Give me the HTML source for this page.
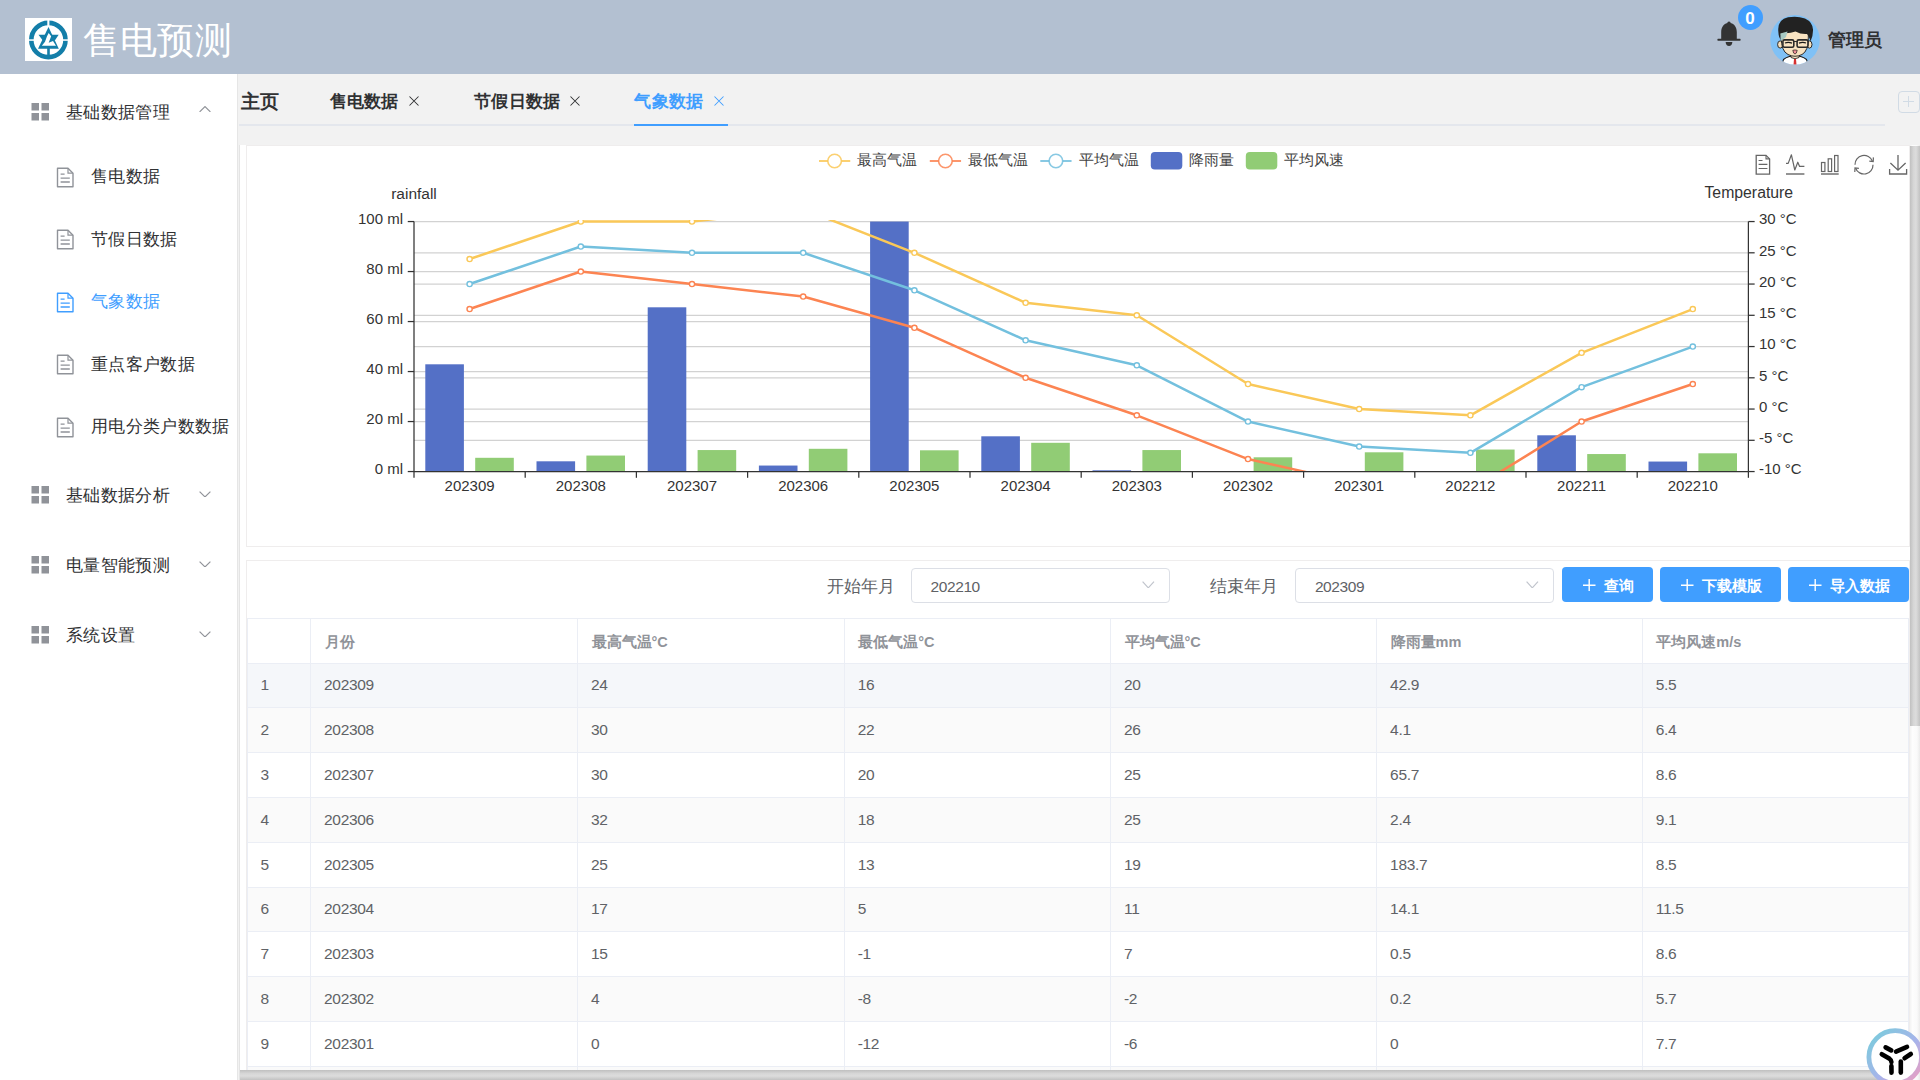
<!DOCTYPE html><html><head><meta charset="utf-8"><title>售电预测</title><style>

*{margin:0;padding:0;box-sizing:border-box}
html,body{width:1920px;height:1080px;overflow:hidden;background:#fff;font-family:"Liberation Sans",sans-serif;color:#303133}
.abs{position:absolute}
#hdr{position:absolute;left:0;top:0;width:1920px;height:74px;background:#b3c0d1}
#side{position:absolute;left:0;top:74px;width:238px;height:1006px;background:#fff;border-right:1px solid #e6e6e6}
#tabbar{position:absolute;left:238px;top:74px;width:1682px;height:71px;background:#f2f2f2}
.t{position:absolute;white-space:nowrap;line-height:1}
.card{position:absolute;border:1px solid #efeded;background:#fff}
.sel{position:absolute;border:1px solid #dcdfe6;border-radius:4px;background:#fff}
.btn{position:absolute;background:#409eff;border-radius:4px}
.row{position:absolute;left:248px;width:1660px;border-bottom:1px solid #ebeef5}
.vl{position:absolute;width:1px;background:#ebeef5}

</style></head><body>
<div id="hdr">
<svg class="abs" style="left:25px;top:18px" width="47" height="43" viewBox="0 0 47 43">
<rect width="47" height="43" fill="#fff"/>
<circle cx="23.4" cy="22" r="17.1" fill="none" stroke="#137ea9" stroke-width="4.6"/>
<rect x="22.3" y="1" width="2.1" height="7" fill="#fff"/>
<rect x="2" y="21.3" width="7" height="1.5" fill="#fff"/>
<rect x="38" y="21.3" width="7" height="1.5" fill="#fff"/>
<polygon points="23.50,9.00 13.00,30.70 33.80,30.70" fill="#137ea9"/>
<polygon points="23.67,15.00 26.17,18.33 23.67,24.67 28.00,23.00 31.00,27.83 16.83,27.83 20.00,23.67 22.00,18.33" fill="#fff"/>
<polygon points="13.50,16.83 21.30,16.83 18.00,22.67" fill="#137ea9"/>
<polygon points="33.67,16.83 25.67,16.83 29.67,22.67" fill="#137ea9"/>
<rect x="22.2" y="30" width="2.6" height="8" fill="#137ea9"/>
</svg>
<div class="t" style="left:82.5px;top:21.5px;font-size:37.3px;letter-spacing:0.4px;font-weight:500;color:#fff">售电预测</div>
<svg class="abs" style="left:1716px;top:20px" width="26" height="27" viewBox="0 0 26 27">
<path d="M13 1.5 C14.2 1.5 14.6 2.3 14.6 3 C19 4 20.8 8 20.8 12 L20.8 18.8 L24 18.8 Q24.6 18.8 24.6 19.6 L24.6 20 Q24.6 20.8 24 20.8 L2 20.8 Q1.4 20.8 1.4 20 L1.4 19.6 Q1.4 18.8 2 18.8 L5.2 18.8 L5.2 12 C5.2 8 7 4 11.4 3 C11.4 2.3 11.8 1.5 13 1.5 Z" fill="#333"/>
<path d="M9.6 22 L16.4 22 Q16 26 13 26 Q10 26 9.6 22 Z" fill="#333"/>
</svg>
<div class="abs" style="left:1738px;top:5px;width:25px;height:25px;border-radius:50%;background:#409eff"></div>
<div class="t" style="left:1745.2px;top:9.5px;font-size:17px;font-weight:700;color:#fff">0</div>
<svg class="abs" style="left:1770px;top:15px" width="50" height="50" viewBox="0 0 50 50">
<defs><clipPath id="av"><circle cx="25" cy="24.8" r="24.8"/></clipPath></defs>
<circle cx="25" cy="24.8" r="24.8" fill="#80c1f6"/>
<g clip-path="url(#av)">
<path d="M11 52 L13.5 44.5 Q18 41 25 40.5 Q32 41 36.5 44.5 L39 52 Z" fill="#fff" stroke="#1a1a1a" stroke-width="1.1"/>
<path d="M24 44 L26 44 L26.6 51 L23.4 51 Z" fill="#d8302f"/>
<path d="M21 37.5 L29 37.5 L29 42.5 Q25 45 21 42.5 Z" fill="#f8e1be" stroke="#1a1a1a" stroke-width="0.8"/>
<ellipse cx="10.2" cy="29.5" rx="2.6" ry="3.6" fill="#f8e1be" stroke="#1a1a1a" stroke-width="0.9"/>
<ellipse cx="39.4" cy="29.5" rx="2.6" ry="3.6" fill="#f8e1be" stroke="#1a1a1a" stroke-width="0.9"/>
<path d="M11.3 14 L11.3 22 Q11 36 18 39.5 Q25 43 32 39.5 Q38.6 36 38.3 22 L38.3 14 Z" fill="#f8e3c2" stroke="#1a1a1a" stroke-width="0.9"/>
<path d="M8.3 13.5 Q8.5 4.5 18 2.3 Q27 0.5 35 3.5 Q42.5 7 43 14.5 Q43.2 21 40.5 26.5 Q39 21 37 19 Q31 19.5 25.5 16.5 Q19 19 11.5 18 Q10.5 22 10.5 25 Q7.8 20 8.3 13.5 Z" fill="#222"/>
<path d="M10.3 18.5 L17.5 16.5 L16 22 L11 26 Z" fill="#a7c9c3"/>
<rect x="12.9" y="24.9" width="10.9" height="7.4" rx="1.6" fill="#f8e3c2" fill-opacity="0.6" stroke="#2a2a2a" stroke-width="1.6"/>
<rect x="27.1" y="24.9" width="10.9" height="7.4" rx="1.6" fill="#f8e3c2" fill-opacity="0.6" stroke="#2a2a2a" stroke-width="1.6"/>
<line x1="23.8" y1="26.5" x2="27.1" y2="26.5" stroke="#2a2a2a" stroke-width="1.2"/>
<path d="M15 28 Q18.5 26.6 22 28.2 M29 28.2 Q32.5 26.6 36 28" stroke="#1a1a1a" stroke-width="1.3" fill="none"/>
<path d="M22.8 35.3 Q25 34.6 27.2 35.3 Q26.6 39 25 39 Q23.4 39 22.8 35.3 Z" fill="#f08f98" stroke="#1a1a1a" stroke-width="0.7"/>
</g></svg>
<div class="t" style="left:1828px;top:31px;font-size:18px;color:#303133;font-weight:600">管理员</div>
</div>
<div id="side">
</div>
<svg class="abs" style="left:31px;top:103px" width="19" height="18" viewBox="0 0 19 18">
<rect x="0.5" y="0" width="7.5" height="7.5" fill="#909399"/><rect x="10.5" y="0" width="7.5" height="7.5" fill="#909399"/>
<rect x="0.5" y="10" width="7.5" height="7.5" fill="#909399"/><rect x="10.5" y="10" width="7.5" height="7.5" fill="#909399"/>
</svg>
<div class="t" style="left:66px;top:103.5px;font-size:17.3px;letter-spacing:0.35px;font-weight:500;color:#303133">基础数据管理</div>
<svg class="abs" style="left:199px;top:105.5px" width="12" height="6.5" viewBox="0 0 12 6.5"><path d="M0.6 5.9 L6.0 0.6 L11.4 5.9" fill="none" stroke="#909399" stroke-width="1.2"/></svg>
<svg class="abs" style="left:31px;top:486px" width="19" height="18" viewBox="0 0 19 18">
<rect x="0.5" y="0" width="7.5" height="7.5" fill="#909399"/><rect x="10.5" y="0" width="7.5" height="7.5" fill="#909399"/>
<rect x="0.5" y="10" width="7.5" height="7.5" fill="#909399"/><rect x="10.5" y="10" width="7.5" height="7.5" fill="#909399"/>
</svg>
<div class="t" style="left:66px;top:486.5px;font-size:17.3px;letter-spacing:0.35px;font-weight:500;color:#303133">基础数据分析</div>
<svg class="abs" style="left:199px;top:490.5px" width="12" height="6.5" viewBox="0 0 12 6.5"><path d="M0.6 0.6 L6.0 5.9 L11.4 0.6" fill="none" stroke="#909399" stroke-width="1.2"/></svg>
<svg class="abs" style="left:31px;top:556px" width="19" height="18" viewBox="0 0 19 18">
<rect x="0.5" y="0" width="7.5" height="7.5" fill="#909399"/><rect x="10.5" y="0" width="7.5" height="7.5" fill="#909399"/>
<rect x="0.5" y="10" width="7.5" height="7.5" fill="#909399"/><rect x="10.5" y="10" width="7.5" height="7.5" fill="#909399"/>
</svg>
<div class="t" style="left:66px;top:556.5px;font-size:17.3px;letter-spacing:0.35px;font-weight:500;color:#303133">电量智能预测</div>
<svg class="abs" style="left:199px;top:560.5px" width="12" height="6.5" viewBox="0 0 12 6.5"><path d="M0.6 0.6 L6.0 5.9 L11.4 0.6" fill="none" stroke="#909399" stroke-width="1.2"/></svg>
<svg class="abs" style="left:31px;top:626px" width="19" height="18" viewBox="0 0 19 18">
<rect x="0.5" y="0" width="7.5" height="7.5" fill="#909399"/><rect x="10.5" y="0" width="7.5" height="7.5" fill="#909399"/>
<rect x="0.5" y="10" width="7.5" height="7.5" fill="#909399"/><rect x="10.5" y="10" width="7.5" height="7.5" fill="#909399"/>
</svg>
<div class="t" style="left:66px;top:626.5px;font-size:17.3px;letter-spacing:0.35px;font-weight:500;color:#303133">系统设置</div>
<svg class="abs" style="left:199px;top:630.5px" width="12" height="6.5" viewBox="0 0 12 6.5"><path d="M0.6 0.6 L6.0 5.9 L11.4 0.6" fill="none" stroke="#909399" stroke-width="1.2"/></svg>
<svg class="abs" style="left:56px;top:167px" width="20" height="22" viewBox="0 0 20 22">
<path d="M1.5 1.2 L12 1.2 L17 6.2 L17 19.8 L1.5 19.8 Z" fill="none" stroke="#909399" stroke-width="1.4" stroke-linejoin="round"/>
<path d="M12 1.2 L12 6.2 L17 6.2" fill="none" stroke="#909399" stroke-width="1.2"/>
<path d="M4.6 7.2 L8.6 7.2 M4.6 11.2 L13.8 11.2 M4.6 15 L13.8 15" stroke="#909399" stroke-width="1.3"/>
</svg>
<div class="t" style="left:91px;top:168.0px;font-size:17.3px;letter-spacing:0.35px;font-weight:500;color:#303133">售电数据</div>
<svg class="abs" style="left:56px;top:229px" width="20" height="22" viewBox="0 0 20 22">
<path d="M1.5 1.2 L12 1.2 L17 6.2 L17 19.8 L1.5 19.8 Z" fill="none" stroke="#909399" stroke-width="1.4" stroke-linejoin="round"/>
<path d="M12 1.2 L12 6.2 L17 6.2" fill="none" stroke="#909399" stroke-width="1.2"/>
<path d="M4.6 7.2 L8.6 7.2 M4.6 11.2 L13.8 11.2 M4.6 15 L13.8 15" stroke="#909399" stroke-width="1.3"/>
</svg>
<div class="t" style="left:91px;top:230.5px;font-size:17.3px;letter-spacing:0.35px;font-weight:500;color:#303133">节假日数据</div>
<svg class="abs" style="left:56px;top:292px" width="20" height="22" viewBox="0 0 20 22">
<path d="M1.5 1.2 L12 1.2 L17 6.2 L17 19.8 L1.5 19.8 Z" fill="none" stroke="#409eff" stroke-width="1.4" stroke-linejoin="round"/>
<path d="M12 1.2 L12 6.2 L17 6.2" fill="none" stroke="#409eff" stroke-width="1.2"/>
<path d="M4.6 7.2 L8.6 7.2 M4.6 11.2 L13.8 11.2 M4.6 15 L13.8 15" stroke="#409eff" stroke-width="1.3"/>
</svg>
<div class="t" style="left:91px;top:293.0px;font-size:17.3px;letter-spacing:0.35px;font-weight:500;color:#409eff">气象数据</div>
<svg class="abs" style="left:56px;top:354px" width="20" height="22" viewBox="0 0 20 22">
<path d="M1.5 1.2 L12 1.2 L17 6.2 L17 19.8 L1.5 19.8 Z" fill="none" stroke="#909399" stroke-width="1.4" stroke-linejoin="round"/>
<path d="M12 1.2 L12 6.2 L17 6.2" fill="none" stroke="#909399" stroke-width="1.2"/>
<path d="M4.6 7.2 L8.6 7.2 M4.6 11.2 L13.8 11.2 M4.6 15 L13.8 15" stroke="#909399" stroke-width="1.3"/>
</svg>
<div class="t" style="left:91px;top:355.5px;font-size:17.3px;letter-spacing:0.35px;font-weight:500;color:#303133">重点客户数据</div>
<svg class="abs" style="left:56px;top:417px" width="20" height="22" viewBox="0 0 20 22">
<path d="M1.5 1.2 L12 1.2 L17 6.2 L17 19.8 L1.5 19.8 Z" fill="none" stroke="#909399" stroke-width="1.4" stroke-linejoin="round"/>
<path d="M12 1.2 L12 6.2 L17 6.2" fill="none" stroke="#909399" stroke-width="1.2"/>
<path d="M4.6 7.2 L8.6 7.2 M4.6 11.2 L13.8 11.2 M4.6 15 L13.8 15" stroke="#909399" stroke-width="1.3"/>
</svg>
<div class="t" style="left:91px;top:418.0px;font-size:17.3px;letter-spacing:0.35px;font-weight:500;color:#303133">用电分类户数数据</div>
<div id="tabbar">
</div>
<div class="t" style="left:240.5px;top:91.5px;font-size:19px;font-weight:700;color:#303133">主页</div>
<div class="t" style="left:329.5px;top:93px;font-size:17.3px;letter-spacing:0.3px;font-weight:700;color:#303133">售电数据</div>
<svg class="abs" style="left:409px;top:96px" width="10" height="10" viewBox="0 0 10 10"><path d="M0.5 0.5 L9.5 9.5 M9.5 0.5 L0.5 9.5" stroke="#303133" stroke-width="1.05"/></svg>
<div class="t" style="left:474px;top:93px;font-size:17.3px;letter-spacing:0.3px;font-weight:700;color:#303133">节假日数据</div>
<svg class="abs" style="left:570px;top:96px" width="10" height="10" viewBox="0 0 10 10"><path d="M0.5 0.5 L9.5 9.5 M9.5 0.5 L0.5 9.5" stroke="#303133" stroke-width="1.05"/></svg>
<div class="t" style="left:634.3px;top:93px;font-size:17.3px;letter-spacing:0.3px;font-weight:700;color:#409eff">气象数据</div>
<svg class="abs" style="left:714px;top:96px" width="10" height="10" viewBox="0 0 10 10"><path d="M0.5 0.5 L9.5 9.5 M9.5 0.5 L0.5 9.5" stroke="#409eff" stroke-width="1.05"/></svg>
<div class="abs" style="left:239px;top:124px;width:1646px;height:2px;background:#e4e7ed"></div>
<div class="abs" style="left:634px;top:124px;width:94px;height:2px;background:#409eff"></div>
<div class="abs" style="left:1898px;top:90.5px;width:21.5px;height:22.5px;border:1px solid #d1dbe5;border-radius:4px"></div>
<svg class="abs" style="left:1903px;top:96px" width="11" height="11" viewBox="0 0 11 11"><path d="M5.5 0 L5.5 11 M0 5.5 L11 5.5" stroke="#d1dbe5" stroke-width="1"/></svg>
<div class="abs" style="left:238px;top:145px;width:1px;height:935px;background:#f2f2f2"></div><div class="abs" style="left:239px;top:145px;width:1px;height:935px;background:#e4e4e4"></div>
<div class="card" style="left:246px;top:145px;width:1664px;height:402px"></div>
<div class="card" style="left:246px;top:560px;width:1664px;height:600px"></div>
<svg class="abs" style="left:0;top:0" width="1920" height="200" viewBox="0 0 1920 200">
<path d="M819.00 161 L850.25 161" stroke="#fac858" stroke-width="2" stroke-opacity="0.85"/>
<circle cx="834.60" cy="161" r="6.8" fill="#fff" stroke="#fac858" stroke-width="1.6" stroke-opacity="0.85"/>
<path d="M929.80 161 L961.05 161" stroke="#fc8452" stroke-width="2" stroke-opacity="0.85"/>
<circle cx="945.40" cy="161" r="6.8" fill="#fff" stroke="#fc8452" stroke-width="1.6" stroke-opacity="0.85"/>
<path d="M1040.30 161 L1071.55 161" stroke="#73c0de" stroke-width="2" stroke-opacity="0.85"/>
<circle cx="1055.90" cy="161" r="6.8" fill="#fff" stroke="#73c0de" stroke-width="1.6" stroke-opacity="0.85"/>
<rect x="1150.8" y="152" width="31.5" height="17.5" rx="4" fill="#5470c6"/>
<rect x="1245.8" y="152" width="31.5" height="17.5" rx="4" fill="#91cc75"/>
</svg>
<div class="t" style="left:857px;top:151.5px;font-size:15px;color:#444">最高气温</div>
<div class="t" style="left:968px;top:151.5px;font-size:15px;color:#444">最低气温</div>
<div class="t" style="left:1078.7px;top:151.5px;font-size:15px;color:#444">平均气温</div>
<div class="t" style="left:1189px;top:151.5px;font-size:15px;color:#444">降雨量</div>
<div class="t" style="left:1284px;top:151.5px;font-size:15px;color:#444">平均风速</div>
<svg class="abs" style="left:1754px;top:153px" width="160" height="24" viewBox="1754 153 160 24">
<path d="M1756.2 155.3 L1766 155.3 L1769.6 158.9 L1769.6 174.2 L1756.2 174.2 Z" fill="none" stroke="#666" stroke-width="1.3"/>
<path d="M1766 155.3 L1766 158.9 L1769.6 158.9" fill="none" stroke="#666" stroke-width="1.1"/>
<path d="M1758.6 160.5 L1762.5 160.5 M1758.6 164.3 L1767.4 164.3 M1758.6 168.5 L1767.4 168.5" stroke="#666" stroke-width="1.2"/>
<path d="M1786 163.4 L1788.2 163.4 L1791.4 154.8 L1794.8 170 L1797.8 162.2 L1799.6 166.4 L1804.4 166.4" fill="none" stroke="#666" stroke-width="1.2" stroke-linejoin="round"/>
<path d="M1786 174 L1804.4 174" stroke="#666" stroke-width="1.4"/>
<rect x="1821.5" y="162.5" width="3.4" height="9" fill="none" stroke="#666" stroke-width="1.2"/>
<rect x="1828.2" y="158.8" width="3.4" height="12.7" fill="none" stroke="#666" stroke-width="1.2"/>
<rect x="1834.6" y="155.5" width="3.4" height="16" fill="none" stroke="#666" stroke-width="1.2"/>
<path d="M1821 174 L1838.7 174" stroke="#666" stroke-width="1.4"/>
<path d="M1855 164.7 A9 9 0 0 1 1872.4 161.2" fill="none" stroke="#666" stroke-width="1.2"/>
<path d="M1873 164.7 A9 9 0 0 1 1855.6 168.2" fill="none" stroke="#666" stroke-width="1.2"/>
<path d="M1873.4 157.4 L1873.2 161.6 L1869.3 161.2" fill="none" stroke="#666" stroke-width="1.2"/>
<path d="M1854.8 172 L1855 167.9 L1858.9 168.3" fill="none" stroke="#666" stroke-width="1.2"/>
<path d="M1898 155 L1898 170.2 M1890.4 163 L1898 170.2 L1905.6 163 M1889.6 169 L1889.6 174 L1906.6 174 L1906.6 169" fill="none" stroke="#666" stroke-width="1.3"/>
</svg>
<svg class="chart" width="1920" height="1080" viewBox="0 0 1920 1080" style="position:absolute;left:0;top:0">
<defs><clipPath id="grid"><rect x="414.00" y="220.05" width="1334.40" height="251.50"/></clipPath></defs>
<line x1="414.00" y1="221.55" x2="1748.40" y2="221.55" stroke="#d2d2d2" stroke-width="1.25"/>
<line x1="414.00" y1="252.80" x2="1748.40" y2="252.80" stroke="#d2d2d2" stroke-width="1.25"/>
<line x1="414.00" y1="271.55" x2="1748.40" y2="271.55" stroke="#d2d2d2" stroke-width="1.25"/>
<line x1="414.00" y1="284.05" x2="1748.40" y2="284.05" stroke="#d2d2d2" stroke-width="1.25"/>
<line x1="414.00" y1="315.30" x2="1748.40" y2="315.30" stroke="#d2d2d2" stroke-width="1.25"/>
<line x1="414.00" y1="321.55" x2="1748.40" y2="321.55" stroke="#d2d2d2" stroke-width="1.25"/>
<line x1="414.00" y1="346.55" x2="1748.40" y2="346.55" stroke="#d2d2d2" stroke-width="1.25"/>
<line x1="414.00" y1="371.55" x2="1748.40" y2="371.55" stroke="#d2d2d2" stroke-width="1.25"/>
<line x1="414.00" y1="377.80" x2="1748.40" y2="377.80" stroke="#d2d2d2" stroke-width="1.25"/>
<line x1="414.00" y1="409.05" x2="1748.40" y2="409.05" stroke="#d2d2d2" stroke-width="1.25"/>
<line x1="414.00" y1="421.55" x2="1748.40" y2="421.55" stroke="#d2d2d2" stroke-width="1.25"/>
<line x1="414.00" y1="440.30" x2="1748.40" y2="440.30" stroke="#d2d2d2" stroke-width="1.25"/>
<rect x="425.30" y="364.30" width="38.60" height="107.25" fill="#5470c6"/>
<rect x="475.20" y="457.80" width="38.60" height="13.75" fill="#91cc75"/>
<rect x="536.50" y="461.30" width="38.60" height="10.25" fill="#5470c6"/>
<rect x="586.40" y="455.55" width="38.60" height="16.00" fill="#91cc75"/>
<rect x="647.70" y="307.30" width="38.60" height="164.25" fill="#5470c6"/>
<rect x="697.60" y="450.05" width="38.60" height="21.50" fill="#91cc75"/>
<rect x="758.90" y="465.55" width="38.60" height="6.00" fill="#5470c6"/>
<rect x="808.80" y="448.80" width="38.60" height="22.75" fill="#91cc75"/>
<rect x="870.10" y="221.55" width="38.60" height="250.00" fill="#5470c6"/>
<rect x="920.00" y="450.30" width="38.60" height="21.25" fill="#91cc75"/>
<rect x="981.30" y="436.30" width="38.60" height="35.25" fill="#5470c6"/>
<rect x="1031.20" y="442.80" width="38.60" height="28.75" fill="#91cc75"/>
<rect x="1092.50" y="470.30" width="38.60" height="1.25" fill="#5470c6"/>
<rect x="1142.40" y="450.05" width="38.60" height="21.50" fill="#91cc75"/>
<rect x="1203.70" y="471.05" width="38.60" height="0.50" fill="#5470c6"/>
<rect x="1253.60" y="457.30" width="38.60" height="14.25" fill="#91cc75"/>
<rect x="1364.80" y="452.30" width="38.60" height="19.25" fill="#91cc75"/>
<rect x="1476.00" y="449.55" width="38.60" height="22.00" fill="#91cc75"/>
<rect x="1537.30" y="435.30" width="38.60" height="36.25" fill="#5470c6"/>
<rect x="1587.20" y="454.05" width="38.60" height="17.50" fill="#91cc75"/>
<rect x="1648.50" y="461.55" width="38.60" height="10.00" fill="#5470c6"/>
<rect x="1698.40" y="453.30" width="38.60" height="18.25" fill="#91cc75"/>
<g clip-path="url(#grid)">
<path d="M469.60 259.05 L580.80 221.55 L692.00 221.55 L803.20 209.05 L914.40 252.80 L1025.60 302.80 L1136.80 315.30 L1248.00 384.05 L1359.20 409.05 L1470.40 415.30 L1581.60 352.80 L1692.80 309.05" fill="none" stroke="#fac858" stroke-width="2.5" stroke-linejoin="round"/>
<circle cx="469.60" cy="259.05" r="2.6" fill="#fff" stroke="#fac858" stroke-width="1.4"/>
<circle cx="580.80" cy="221.55" r="2.6" fill="#fff" stroke="#fac858" stroke-width="1.4"/>
<circle cx="692.00" cy="221.55" r="2.6" fill="#fff" stroke="#fac858" stroke-width="1.4"/>
<circle cx="914.40" cy="252.80" r="2.6" fill="#fff" stroke="#fac858" stroke-width="1.4"/>
<circle cx="1025.60" cy="302.80" r="2.6" fill="#fff" stroke="#fac858" stroke-width="1.4"/>
<circle cx="1136.80" cy="315.30" r="2.6" fill="#fff" stroke="#fac858" stroke-width="1.4"/>
<circle cx="1248.00" cy="384.05" r="2.6" fill="#fff" stroke="#fac858" stroke-width="1.4"/>
<circle cx="1359.20" cy="409.05" r="2.6" fill="#fff" stroke="#fac858" stroke-width="1.4"/>
<circle cx="1470.40" cy="415.30" r="2.6" fill="#fff" stroke="#fac858" stroke-width="1.4"/>
<circle cx="1581.60" cy="352.80" r="2.6" fill="#fff" stroke="#fac858" stroke-width="1.4"/>
<circle cx="1692.80" cy="309.05" r="2.6" fill="#fff" stroke="#fac858" stroke-width="1.4"/>
</g>
<g clip-path="url(#grid)">
<path d="M469.60 309.05 L580.80 271.55 L692.00 284.05 L803.20 296.55 L914.40 327.80 L1025.60 377.80 L1136.80 415.30 L1248.00 459.05 L1359.20 484.05 L1470.40 490.30 L1581.60 421.55 L1692.80 384.05" fill="none" stroke="#fc8452" stroke-width="2.5" stroke-linejoin="round"/>
<circle cx="469.60" cy="309.05" r="2.6" fill="#fff" stroke="#fc8452" stroke-width="1.4"/>
<circle cx="580.80" cy="271.55" r="2.6" fill="#fff" stroke="#fc8452" stroke-width="1.4"/>
<circle cx="692.00" cy="284.05" r="2.6" fill="#fff" stroke="#fc8452" stroke-width="1.4"/>
<circle cx="803.20" cy="296.55" r="2.6" fill="#fff" stroke="#fc8452" stroke-width="1.4"/>
<circle cx="914.40" cy="327.80" r="2.6" fill="#fff" stroke="#fc8452" stroke-width="1.4"/>
<circle cx="1025.60" cy="377.80" r="2.6" fill="#fff" stroke="#fc8452" stroke-width="1.4"/>
<circle cx="1136.80" cy="415.30" r="2.6" fill="#fff" stroke="#fc8452" stroke-width="1.4"/>
<circle cx="1248.00" cy="459.05" r="2.6" fill="#fff" stroke="#fc8452" stroke-width="1.4"/>
<circle cx="1581.60" cy="421.55" r="2.6" fill="#fff" stroke="#fc8452" stroke-width="1.4"/>
<circle cx="1692.80" cy="384.05" r="2.6" fill="#fff" stroke="#fc8452" stroke-width="1.4"/>
</g>
<g clip-path="url(#grid)">
<path d="M469.60 284.05 L580.80 246.55 L692.00 252.80 L803.20 252.80 L914.40 290.30 L1025.60 340.30 L1136.80 365.30 L1248.00 421.55 L1359.20 446.55 L1470.40 452.80 L1581.60 387.18 L1692.80 346.55" fill="none" stroke="#73c0de" stroke-width="2.5" stroke-linejoin="round"/>
<circle cx="469.60" cy="284.05" r="2.6" fill="#fff" stroke="#73c0de" stroke-width="1.4"/>
<circle cx="580.80" cy="246.55" r="2.6" fill="#fff" stroke="#73c0de" stroke-width="1.4"/>
<circle cx="692.00" cy="252.80" r="2.6" fill="#fff" stroke="#73c0de" stroke-width="1.4"/>
<circle cx="803.20" cy="252.80" r="2.6" fill="#fff" stroke="#73c0de" stroke-width="1.4"/>
<circle cx="914.40" cy="290.30" r="2.6" fill="#fff" stroke="#73c0de" stroke-width="1.4"/>
<circle cx="1025.60" cy="340.30" r="2.6" fill="#fff" stroke="#73c0de" stroke-width="1.4"/>
<circle cx="1136.80" cy="365.30" r="2.6" fill="#fff" stroke="#73c0de" stroke-width="1.4"/>
<circle cx="1248.00" cy="421.55" r="2.6" fill="#fff" stroke="#73c0de" stroke-width="1.4"/>
<circle cx="1359.20" cy="446.55" r="2.6" fill="#fff" stroke="#73c0de" stroke-width="1.4"/>
<circle cx="1470.40" cy="452.80" r="2.6" fill="#fff" stroke="#73c0de" stroke-width="1.4"/>
<circle cx="1581.60" cy="387.18" r="2.6" fill="#fff" stroke="#73c0de" stroke-width="1.4"/>
<circle cx="1692.80" cy="346.55" r="2.6" fill="#fff" stroke="#73c0de" stroke-width="1.4"/>
</g>
<line x1="414.00" y1="221.55" x2="414.00" y2="471.55" stroke="#333" stroke-width="1.25"/>
<line x1="1748.40" y1="221.55" x2="1748.40" y2="471.55" stroke="#333" stroke-width="1.25"/>
<line x1="414.00" y1="471.55" x2="1748.40" y2="471.55" stroke="#333" stroke-width="1.25"/>
<line x1="407.75" y1="221.55" x2="414.00" y2="221.55" stroke="#333" stroke-width="1.25"/>
<line x1="407.75" y1="271.55" x2="414.00" y2="271.55" stroke="#333" stroke-width="1.25"/>
<line x1="407.75" y1="321.55" x2="414.00" y2="321.55" stroke="#333" stroke-width="1.25"/>
<line x1="407.75" y1="371.55" x2="414.00" y2="371.55" stroke="#333" stroke-width="1.25"/>
<line x1="407.75" y1="421.55" x2="414.00" y2="421.55" stroke="#333" stroke-width="1.25"/>
<line x1="407.75" y1="471.55" x2="414.00" y2="471.55" stroke="#333" stroke-width="1.25"/>
<line x1="1748.40" y1="221.55" x2="1754.65" y2="221.55" stroke="#333" stroke-width="1.25"/>
<line x1="1748.40" y1="252.80" x2="1754.65" y2="252.80" stroke="#333" stroke-width="1.25"/>
<line x1="1748.40" y1="284.05" x2="1754.65" y2="284.05" stroke="#333" stroke-width="1.25"/>
<line x1="1748.40" y1="315.30" x2="1754.65" y2="315.30" stroke="#333" stroke-width="1.25"/>
<line x1="1748.40" y1="346.55" x2="1754.65" y2="346.55" stroke="#333" stroke-width="1.25"/>
<line x1="1748.40" y1="377.80" x2="1754.65" y2="377.80" stroke="#333" stroke-width="1.25"/>
<line x1="1748.40" y1="409.05" x2="1754.65" y2="409.05" stroke="#333" stroke-width="1.25"/>
<line x1="1748.40" y1="440.30" x2="1754.65" y2="440.30" stroke="#333" stroke-width="1.25"/>
<line x1="1748.40" y1="471.55" x2="1754.65" y2="471.55" stroke="#333" stroke-width="1.25"/>
<line x1="414.00" y1="471.55" x2="414.00" y2="477.80" stroke="#333" stroke-width="1.25"/>
<line x1="525.20" y1="471.55" x2="525.20" y2="477.80" stroke="#333" stroke-width="1.25"/>
<line x1="636.40" y1="471.55" x2="636.40" y2="477.80" stroke="#333" stroke-width="1.25"/>
<line x1="747.60" y1="471.55" x2="747.60" y2="477.80" stroke="#333" stroke-width="1.25"/>
<line x1="858.80" y1="471.55" x2="858.80" y2="477.80" stroke="#333" stroke-width="1.25"/>
<line x1="970.00" y1="471.55" x2="970.00" y2="477.80" stroke="#333" stroke-width="1.25"/>
<line x1="1081.20" y1="471.55" x2="1081.20" y2="477.80" stroke="#333" stroke-width="1.25"/>
<line x1="1192.40" y1="471.55" x2="1192.40" y2="477.80" stroke="#333" stroke-width="1.25"/>
<line x1="1303.60" y1="471.55" x2="1303.60" y2="477.80" stroke="#333" stroke-width="1.25"/>
<line x1="1414.80" y1="471.55" x2="1414.80" y2="477.80" stroke="#333" stroke-width="1.25"/>
<line x1="1526.00" y1="471.55" x2="1526.00" y2="477.80" stroke="#333" stroke-width="1.25"/>
<line x1="1637.20" y1="471.55" x2="1637.20" y2="477.80" stroke="#333" stroke-width="1.25"/>
<line x1="1748.40" y1="471.55" x2="1748.40" y2="477.80" stroke="#333" stroke-width="1.25"/>
<text x="403" y="224.45" text-anchor="end" font-family="Liberation Sans, sans-serif" font-size="15" fill="#333">100 ml</text>
<text x="403" y="274.45" text-anchor="end" font-family="Liberation Sans, sans-serif" font-size="15" fill="#333">80 ml</text>
<text x="403" y="324.45" text-anchor="end" font-family="Liberation Sans, sans-serif" font-size="15" fill="#333">60 ml</text>
<text x="403" y="374.45" text-anchor="end" font-family="Liberation Sans, sans-serif" font-size="15" fill="#333">40 ml</text>
<text x="403" y="424.45" text-anchor="end" font-family="Liberation Sans, sans-serif" font-size="15" fill="#333">20 ml</text>
<text x="403" y="474.45" text-anchor="end" font-family="Liberation Sans, sans-serif" font-size="15" fill="#333">0 ml</text>
<text x="1759" y="224.45" font-family="Liberation Sans, sans-serif" font-size="15" fill="#333">30 °C</text>
<text x="1759" y="255.70" font-family="Liberation Sans, sans-serif" font-size="15" fill="#333">25 °C</text>
<text x="1759" y="286.95" font-family="Liberation Sans, sans-serif" font-size="15" fill="#333">20 °C</text>
<text x="1759" y="318.20" font-family="Liberation Sans, sans-serif" font-size="15" fill="#333">15 °C</text>
<text x="1759" y="349.45" font-family="Liberation Sans, sans-serif" font-size="15" fill="#333">10 °C</text>
<text x="1759" y="380.70" font-family="Liberation Sans, sans-serif" font-size="15" fill="#333">5 °C</text>
<text x="1759" y="411.95" font-family="Liberation Sans, sans-serif" font-size="15" fill="#333">0 °C</text>
<text x="1759" y="443.20" font-family="Liberation Sans, sans-serif" font-size="15" fill="#333">-5 °C</text>
<text x="1759" y="474.45" font-family="Liberation Sans, sans-serif" font-size="15" fill="#333">-10 °C</text>
<text x="469.60" y="491" text-anchor="middle" font-family="Liberation Sans, sans-serif" font-size="15" fill="#333">202309</text>
<text x="580.80" y="491" text-anchor="middle" font-family="Liberation Sans, sans-serif" font-size="15" fill="#333">202308</text>
<text x="692.00" y="491" text-anchor="middle" font-family="Liberation Sans, sans-serif" font-size="15" fill="#333">202307</text>
<text x="803.20" y="491" text-anchor="middle" font-family="Liberation Sans, sans-serif" font-size="15" fill="#333">202306</text>
<text x="914.40" y="491" text-anchor="middle" font-family="Liberation Sans, sans-serif" font-size="15" fill="#333">202305</text>
<text x="1025.60" y="491" text-anchor="middle" font-family="Liberation Sans, sans-serif" font-size="15" fill="#333">202304</text>
<text x="1136.80" y="491" text-anchor="middle" font-family="Liberation Sans, sans-serif" font-size="15" fill="#333">202303</text>
<text x="1248.00" y="491" text-anchor="middle" font-family="Liberation Sans, sans-serif" font-size="15" fill="#333">202302</text>
<text x="1359.20" y="491" text-anchor="middle" font-family="Liberation Sans, sans-serif" font-size="15" fill="#333">202301</text>
<text x="1470.40" y="491" text-anchor="middle" font-family="Liberation Sans, sans-serif" font-size="15" fill="#333">202212</text>
<text x="1581.60" y="491" text-anchor="middle" font-family="Liberation Sans, sans-serif" font-size="15" fill="#333">202211</text>
<text x="1692.80" y="491" text-anchor="middle" font-family="Liberation Sans, sans-serif" font-size="15" fill="#333">202210</text>
<text x="414" y="198.5" text-anchor="middle" font-family="Liberation Sans, sans-serif" font-size="15.5" fill="#333">rainfall</text>
<text x="1748.8" y="198.3" text-anchor="middle" font-family="Liberation Sans, sans-serif" font-size="15.8" fill="#333">Temperature</text>
</svg>
<div class="t" style="left:826.5px;top:578px;font-size:17px;font-weight:500;color:#606266">开始年月</div>
<div class="sel" style="left:911px;top:568px;width:259px;height:35px"></div>
<div class="t" style="left:930.5px;top:579px;font-size:15.5px;letter-spacing:-0.4px;color:#606266">202210</div>
<svg class="abs" style="left:1142.2px;top:580.6px" width="12.6" height="7.4" viewBox="0 0 12.6 7.4"><path d="M0.6 0.6 L6.3 6.8 L12.0 0.6" fill="none" stroke="#c0c4cc" stroke-width="1.2"/></svg>
<div class="t" style="left:1210.4px;top:578px;font-size:17px;font-weight:500;color:#606266">结束年月</div>
<div class="sel" style="left:1295px;top:568px;width:259px;height:35px"></div>
<div class="t" style="left:1314.9px;top:579px;font-size:15.5px;letter-spacing:-0.4px;color:#606266">202309</div>
<svg class="abs" style="left:1526.2px;top:580.6px" width="12.6" height="7.4" viewBox="0 0 12.6 7.4"><path d="M0.6 0.6 L6.3 6.8 L12.0 0.6" fill="none" stroke="#c0c4cc" stroke-width="1.2"/></svg>
<div class="btn" style="left:1562px;top:567px;width:91px;height:34.5px"></div>
<svg class="abs" style="left:1583px;top:578.5px" width="12.5" height="12.5" viewBox="0 0 12.5 12.5"><path d="M6.2 0 L6.2 12.5 M0 6.2 L12.5 6.2" stroke="#fff" stroke-width="1.4"/></svg>
<div class="t" style="left:1603.5px;top:577.5px;font-size:15px;font-weight:700;color:#fff">查询</div>
<div class="btn" style="left:1660px;top:567px;width:121px;height:34.5px"></div>
<svg class="abs" style="left:1681px;top:578.5px" width="12.5" height="12.5" viewBox="0 0 12.5 12.5"><path d="M6.2 0 L6.2 12.5 M0 6.2 L12.5 6.2" stroke="#fff" stroke-width="1.4"/></svg>
<div class="t" style="left:1701.8px;top:577.5px;font-size:15px;font-weight:700;color:#fff">下载模版</div>
<div class="btn" style="left:1788px;top:567px;width:121px;height:34.5px"></div>
<svg class="abs" style="left:1809.4px;top:578.5px" width="12.5" height="12.5" viewBox="0 0 12.5 12.5"><path d="M6.2 0 L6.2 12.5 M0 6.2 L12.5 6.2" stroke="#fff" stroke-width="1.4"/></svg>
<div class="t" style="left:1830px;top:577.5px;font-size:15px;font-weight:700;color:#fff">导入数据</div>
<div class="abs" style="left:247.5px;top:618px;width:1661px;height:1px;background:#ebeef5"></div>
<div class="abs" style="left:247.5px;top:663.0px;width:1661px;height:44.8px;background:#f5f7fa"></div>
<div class="abs" style="left:247.5px;top:707.8px;width:1661px;height:44.8px;background:#fafafa"></div>
<div class="abs" style="left:247.5px;top:752.6px;width:1661px;height:44.8px;background:#fff"></div>
<div class="abs" style="left:247.5px;top:797.4px;width:1661px;height:44.8px;background:#fafafa"></div>
<div class="abs" style="left:247.5px;top:842.2px;width:1661px;height:44.8px;background:#fff"></div>
<div class="abs" style="left:247.5px;top:887.0px;width:1661px;height:44.8px;background:#fafafa"></div>
<div class="abs" style="left:247.5px;top:931.8px;width:1661px;height:44.8px;background:#fff"></div>
<div class="abs" style="left:247.5px;top:976.6px;width:1661px;height:44.8px;background:#fafafa"></div>
<div class="abs" style="left:247.5px;top:1021.4px;width:1661px;height:44.8px;background:#fff"></div>
<div class="abs" style="left:247.5px;top:1066.2px;width:1661px;height:44.8px;background:#fafafa"></div>
<div class="abs" style="left:247.5px;top:662.5px;width:1661px;height:1px;background:#ebeef5"></div>
<div class="abs" style="left:247.5px;top:707.3px;width:1661px;height:1px;background:#ebeef5"></div>
<div class="abs" style="left:247.5px;top:752.1px;width:1661px;height:1px;background:#ebeef5"></div>
<div class="abs" style="left:247.5px;top:796.9px;width:1661px;height:1px;background:#ebeef5"></div>
<div class="abs" style="left:247.5px;top:841.7px;width:1661px;height:1px;background:#ebeef5"></div>
<div class="abs" style="left:247.5px;top:886.5px;width:1661px;height:1px;background:#ebeef5"></div>
<div class="abs" style="left:247.5px;top:931.3px;width:1661px;height:1px;background:#ebeef5"></div>
<div class="abs" style="left:247.5px;top:976.1px;width:1661px;height:1px;background:#ebeef5"></div>
<div class="abs" style="left:247.5px;top:1020.9px;width:1661px;height:1px;background:#ebeef5"></div>
<div class="abs" style="left:247.5px;top:1065.7px;width:1661px;height:1px;background:#ebeef5"></div>
<div class="abs" style="left:247.5px;top:1110.5px;width:1661px;height:1px;background:#ebeef5"></div>
<div class="vl" style="left:247.0px;top:618px;height:462px"></div>
<div class="vl" style="left:310.0px;top:618px;height:462px"></div>
<div class="vl" style="left:577.0px;top:618px;height:462px"></div>
<div class="vl" style="left:843.7px;top:618px;height:462px"></div>
<div class="vl" style="left:1110.0px;top:618px;height:462px"></div>
<div class="vl" style="left:1376.1px;top:618px;height:462px"></div>
<div class="vl" style="left:1641.8px;top:618px;height:462px"></div>
<div class="vl" style="left:1907.8px;top:618px;height:462px"></div>
<div class="t" style="left:324.5px;top:634.5px;font-size:14.5px;font-weight:700;color:#909399">月份</div>
<div class="t" style="left:591.5px;top:634.5px;font-size:14.5px;font-weight:700;color:#909399">最高气温°C</div>
<div class="t" style="left:858.2px;top:634.5px;font-size:14.5px;font-weight:700;color:#909399">最低气温°C</div>
<div class="t" style="left:1124.5px;top:634.5px;font-size:14.5px;font-weight:700;color:#909399">平均气温°C</div>
<div class="t" style="left:1390.6px;top:634.5px;font-size:14.5px;font-weight:700;color:#909399">降雨量mm</div>
<div class="t" style="left:1656.3px;top:634.5px;font-size:14.5px;font-weight:700;color:#909399">平均风速m/s</div>
<div class="t" style="left:260.5px;top:677.4px;font-size:15.5px;letter-spacing:-0.3px;color:#606266">1</div>
<div class="t" style="left:324.0px;top:677.4px;font-size:15.5px;letter-spacing:-0.3px;color:#606266">202309</div>
<div class="t" style="left:591.0px;top:677.4px;font-size:15.5px;letter-spacing:-0.3px;color:#606266">24</div>
<div class="t" style="left:857.7px;top:677.4px;font-size:15.5px;letter-spacing:-0.3px;color:#606266">16</div>
<div class="t" style="left:1124.0px;top:677.4px;font-size:15.5px;letter-spacing:-0.3px;color:#606266">20</div>
<div class="t" style="left:1390.1px;top:677.4px;font-size:15.5px;letter-spacing:-0.3px;color:#606266">42.9</div>
<div class="t" style="left:1655.8px;top:677.4px;font-size:15.5px;letter-spacing:-0.3px;color:#606266">5.5</div>
<div class="t" style="left:260.5px;top:722.1999999999999px;font-size:15.5px;letter-spacing:-0.3px;color:#606266">2</div>
<div class="t" style="left:324.0px;top:722.1999999999999px;font-size:15.5px;letter-spacing:-0.3px;color:#606266">202308</div>
<div class="t" style="left:591.0px;top:722.1999999999999px;font-size:15.5px;letter-spacing:-0.3px;color:#606266">30</div>
<div class="t" style="left:857.7px;top:722.1999999999999px;font-size:15.5px;letter-spacing:-0.3px;color:#606266">22</div>
<div class="t" style="left:1124.0px;top:722.1999999999999px;font-size:15.5px;letter-spacing:-0.3px;color:#606266">26</div>
<div class="t" style="left:1390.1px;top:722.1999999999999px;font-size:15.5px;letter-spacing:-0.3px;color:#606266">4.1</div>
<div class="t" style="left:1655.8px;top:722.1999999999999px;font-size:15.5px;letter-spacing:-0.3px;color:#606266">6.4</div>
<div class="t" style="left:260.5px;top:767.0px;font-size:15.5px;letter-spacing:-0.3px;color:#606266">3</div>
<div class="t" style="left:324.0px;top:767.0px;font-size:15.5px;letter-spacing:-0.3px;color:#606266">202307</div>
<div class="t" style="left:591.0px;top:767.0px;font-size:15.5px;letter-spacing:-0.3px;color:#606266">30</div>
<div class="t" style="left:857.7px;top:767.0px;font-size:15.5px;letter-spacing:-0.3px;color:#606266">20</div>
<div class="t" style="left:1124.0px;top:767.0px;font-size:15.5px;letter-spacing:-0.3px;color:#606266">25</div>
<div class="t" style="left:1390.1px;top:767.0px;font-size:15.5px;letter-spacing:-0.3px;color:#606266">65.7</div>
<div class="t" style="left:1655.8px;top:767.0px;font-size:15.5px;letter-spacing:-0.3px;color:#606266">8.6</div>
<div class="t" style="left:260.5px;top:811.8px;font-size:15.5px;letter-spacing:-0.3px;color:#606266">4</div>
<div class="t" style="left:324.0px;top:811.8px;font-size:15.5px;letter-spacing:-0.3px;color:#606266">202306</div>
<div class="t" style="left:591.0px;top:811.8px;font-size:15.5px;letter-spacing:-0.3px;color:#606266">32</div>
<div class="t" style="left:857.7px;top:811.8px;font-size:15.5px;letter-spacing:-0.3px;color:#606266">18</div>
<div class="t" style="left:1124.0px;top:811.8px;font-size:15.5px;letter-spacing:-0.3px;color:#606266">25</div>
<div class="t" style="left:1390.1px;top:811.8px;font-size:15.5px;letter-spacing:-0.3px;color:#606266">2.4</div>
<div class="t" style="left:1655.8px;top:811.8px;font-size:15.5px;letter-spacing:-0.3px;color:#606266">9.1</div>
<div class="t" style="left:260.5px;top:856.6px;font-size:15.5px;letter-spacing:-0.3px;color:#606266">5</div>
<div class="t" style="left:324.0px;top:856.6px;font-size:15.5px;letter-spacing:-0.3px;color:#606266">202305</div>
<div class="t" style="left:591.0px;top:856.6px;font-size:15.5px;letter-spacing:-0.3px;color:#606266">25</div>
<div class="t" style="left:857.7px;top:856.6px;font-size:15.5px;letter-spacing:-0.3px;color:#606266">13</div>
<div class="t" style="left:1124.0px;top:856.6px;font-size:15.5px;letter-spacing:-0.3px;color:#606266">19</div>
<div class="t" style="left:1390.1px;top:856.6px;font-size:15.5px;letter-spacing:-0.3px;color:#606266">183.7</div>
<div class="t" style="left:1655.8px;top:856.6px;font-size:15.5px;letter-spacing:-0.3px;color:#606266">8.5</div>
<div class="t" style="left:260.5px;top:901.4px;font-size:15.5px;letter-spacing:-0.3px;color:#606266">6</div>
<div class="t" style="left:324.0px;top:901.4px;font-size:15.5px;letter-spacing:-0.3px;color:#606266">202304</div>
<div class="t" style="left:591.0px;top:901.4px;font-size:15.5px;letter-spacing:-0.3px;color:#606266">17</div>
<div class="t" style="left:857.7px;top:901.4px;font-size:15.5px;letter-spacing:-0.3px;color:#606266">5</div>
<div class="t" style="left:1124.0px;top:901.4px;font-size:15.5px;letter-spacing:-0.3px;color:#606266">11</div>
<div class="t" style="left:1390.1px;top:901.4px;font-size:15.5px;letter-spacing:-0.3px;color:#606266">14.1</div>
<div class="t" style="left:1655.8px;top:901.4px;font-size:15.5px;letter-spacing:-0.3px;color:#606266">11.5</div>
<div class="t" style="left:260.5px;top:946.1999999999999px;font-size:15.5px;letter-spacing:-0.3px;color:#606266">7</div>
<div class="t" style="left:324.0px;top:946.1999999999999px;font-size:15.5px;letter-spacing:-0.3px;color:#606266">202303</div>
<div class="t" style="left:591.0px;top:946.1999999999999px;font-size:15.5px;letter-spacing:-0.3px;color:#606266">15</div>
<div class="t" style="left:857.7px;top:946.1999999999999px;font-size:15.5px;letter-spacing:-0.3px;color:#606266">-1</div>
<div class="t" style="left:1124.0px;top:946.1999999999999px;font-size:15.5px;letter-spacing:-0.3px;color:#606266">7</div>
<div class="t" style="left:1390.1px;top:946.1999999999999px;font-size:15.5px;letter-spacing:-0.3px;color:#606266">0.5</div>
<div class="t" style="left:1655.8px;top:946.1999999999999px;font-size:15.5px;letter-spacing:-0.3px;color:#606266">8.6</div>
<div class="t" style="left:260.5px;top:990.9999999999999px;font-size:15.5px;letter-spacing:-0.3px;color:#606266">8</div>
<div class="t" style="left:324.0px;top:990.9999999999999px;font-size:15.5px;letter-spacing:-0.3px;color:#606266">202302</div>
<div class="t" style="left:591.0px;top:990.9999999999999px;font-size:15.5px;letter-spacing:-0.3px;color:#606266">4</div>
<div class="t" style="left:857.7px;top:990.9999999999999px;font-size:15.5px;letter-spacing:-0.3px;color:#606266">-8</div>
<div class="t" style="left:1124.0px;top:990.9999999999999px;font-size:15.5px;letter-spacing:-0.3px;color:#606266">-2</div>
<div class="t" style="left:1390.1px;top:990.9999999999999px;font-size:15.5px;letter-spacing:-0.3px;color:#606266">0.2</div>
<div class="t" style="left:1655.8px;top:990.9999999999999px;font-size:15.5px;letter-spacing:-0.3px;color:#606266">5.7</div>
<div class="t" style="left:260.5px;top:1035.8px;font-size:15.5px;letter-spacing:-0.3px;color:#606266">9</div>
<div class="t" style="left:324.0px;top:1035.8px;font-size:15.5px;letter-spacing:-0.3px;color:#606266">202301</div>
<div class="t" style="left:591.0px;top:1035.8px;font-size:15.5px;letter-spacing:-0.3px;color:#606266">0</div>
<div class="t" style="left:857.7px;top:1035.8px;font-size:15.5px;letter-spacing:-0.3px;color:#606266">-12</div>
<div class="t" style="left:1124.0px;top:1035.8px;font-size:15.5px;letter-spacing:-0.3px;color:#606266">-6</div>
<div class="t" style="left:1390.1px;top:1035.8px;font-size:15.5px;letter-spacing:-0.3px;color:#606266">0</div>
<div class="t" style="left:1655.8px;top:1035.8px;font-size:15.5px;letter-spacing:-0.3px;color:#606266">7.7</div>
<div class="t" style="left:260.5px;top:1080.6000000000001px;font-size:15.5px;letter-spacing:-0.3px;color:#606266">10</div>
<div class="t" style="left:324.0px;top:1080.6000000000001px;font-size:15.5px;letter-spacing:-0.3px;color:#606266">202212</div>
<div class="t" style="left:591.0px;top:1080.6000000000001px;font-size:15.5px;letter-spacing:-0.3px;color:#606266">-1</div>
<div class="t" style="left:857.7px;top:1080.6000000000001px;font-size:15.5px;letter-spacing:-0.3px;color:#606266">-13</div>
<div class="t" style="left:1124.0px;top:1080.6000000000001px;font-size:15.5px;letter-spacing:-0.3px;color:#606266">-7</div>
<div class="t" style="left:1390.1px;top:1080.6000000000001px;font-size:15.5px;letter-spacing:-0.3px;color:#606266">0</div>
<div class="t" style="left:1655.8px;top:1080.6000000000001px;font-size:15.5px;letter-spacing:-0.3px;color:#606266">8.8</div>
<div class="abs" style="left:1910px;top:145px;width:10px;height:935px;background:linear-gradient(90deg,#f3f3f3,#fdfdfd 25%,#fafafa 70%,#ebebeb)"></div>
<div class="abs" style="left:1910px;top:145.5px;width:10px;height:580.5px;background:linear-gradient(90deg,#c0c0c0,#d6d6d6 35%,#dcdcdc 60%,#c2c2c2)"></div>
<div class="abs" style="left:240px;top:1070px;width:1670px;height:10px;background:linear-gradient(180deg,#bfbfbf,#d6d6d6 35%,#dcdcdc 60%,#c2c2c2)"></div>
<svg class="abs" style="left:1860px;top:1020px" width="60" height="60" viewBox="1860 1020 60 60">
<defs><linearGradient id="cg" x1="0" y1="0" x2="1" y2="1"><stop offset="0" stop-color="#76cedb"/><stop offset="0.55" stop-color="#a8b3ea"/><stop offset="1" stop-color="#f29bbd"/></linearGradient></defs>
<circle cx="1895.2" cy="1057" r="26.3" fill="#fff" stroke="url(#cg)" stroke-width="4.8"/>
<g stroke="#000" stroke-width="4.6" stroke-linecap="round" fill="none">
<path d="M1885.6 1047.4 L1891.2 1050.4"/>
<path d="M1896 1051.6 L1907 1046.8"/>
<path d="M1881.8 1054.2 L1889.6 1058.8 Q1891.4 1060 1891.4 1062"/>
<path d="M1904.6 1058.2 L1910.8 1054"/>
<path d="M1891.4 1066 L1891.5 1072.6"/>
<path d="M1900.8 1061.6 L1900.8 1072.6"/>
</g>
</svg>
</body></html>
